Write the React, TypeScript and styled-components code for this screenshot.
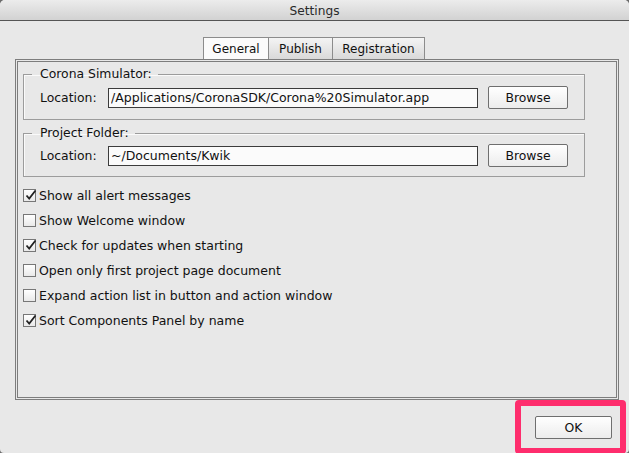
import React from "react";
import styled, { createGlobalStyle } from "styled-components";

const GlobalStyle = createGlobalStyle`
  html, body {
    margin: 0;
    padding: 0;
    background: #6b6b6b;
  }
  body {
    font-family: "Lucida Grande", "DejaVu Sans", sans-serif;
    font-size: 12.4px;
    color: #111;
  }
`;

const Window = styled.div`
  width: 629px;
  height: 453px;
  background: #e8e8e8;
  border-radius: 5px 5px 4px 4px;
  display: flex;
  flex-direction: column;
  overflow: hidden;
`;

const TitleBar = styled.div`
  flex: none;
  height: 21px;
  padding-top: 1px;
  box-sizing: border-box;
  border-bottom: 1px solid #555;
  background: linear-gradient(#ececec, #d2d2d2);
  display: flex;
  align-items: center;
  justify-content: center;
  color: #2a2a2a;
  font-size: 12.2px;
`;

const Body = styled.div`
  flex: none;
  display: flex;
  flex-direction: column;
  padding: 16px 15px 0 15px;
`;

const TabStrip = styled.div`
  display: flex;
  justify-content: center;
  height: 22px;
`;

const Tab = styled.div<{ $active?: boolean; $w: number }>`
  width: ${(p) => p.$w}px;
  height: 21px;
  box-sizing: content-box;
  border: 1px solid #8c8c8c;
  border-bottom: none;
  margin-left: -1px;
  display: flex;
  align-items: center;
  justify-content: center;
  font-size: 12px;
  background: ${(p) =>
    p.$active ? "#fbfbfb" : "linear-gradient(#f4f4f4, #d9d9d9)"};
`;

const Panel = styled.div`
  width: 593px;
  height: 330px;
  border: 3px double #7d7d7d;
  display: flex;
  flex-direction: column;
  padding: 5px 0 0 5px;
  box-sizing: content-box;
`;

const Group = styled.fieldset`
  width: 560px;
  margin: 0 0 6px 0;
  padding: 0;
  border: 1px solid #9c9c9c;
  box-shadow: inset 1px 1px 0 #fafafa;
  min-inline-size: 0;
`;

const Legend = styled.legend`
  margin-left: 8px;
  padding: 0 6px 0 8px;
  line-height: 14px;
  font-size: 12.4px;
`;

const Row = styled.div<{ $top: number; $bottom: number }>`
  display: flex;
  align-items: center;
  padding: ${(p) => p.$top}px 0 ${(p) => p.$bottom}px 16px;
`;

const FieldLabel = styled.span`
  width: 68px;
`;

const PathField = styled.input`
  width: 370px;
  height: 20px;
  box-sizing: border-box;
  border: 1px solid #3c3c3c;
  background: #fbfbfb;
  padding: 0 2px;
  margin: 0 10px 0 0;
  font-family: inherit;
  font-size: 12.5px;
  color: #111;
  outline: none;
`;

const PushButton = styled.button<{ $w: number }>`
  width: ${(p) => p.$w}px;
  height: 23px;
  box-sizing: border-box;
  border: 1px solid #6f6f6f;
  border-radius: 2px;
  background: linear-gradient(#ffffff, #ececec);
  font-family: inherit;
  font-size: 12.4px;
  color: #111;
  padding: 0;
  margin: 0;
`;

const CheckList = styled.div`
  display: flex;
  flex-direction: column;
  margin-top: 0;
`;

const CheckRow = styled.label`
  height: 25px;
  display: flex;
  align-items: center;
  gap: 3px;
  font-size: 12.5px;
`;

const Box = styled.span`
  width: 13px;
  height: 13px;
  box-sizing: border-box;
  border: 1px solid #777;
  background: linear-gradient(#ffffff, #e9e9e9);
  position: relative;
`;

const Tick = styled.svg`
  position: absolute;
  left: 0;
  top: -2px;
`;

const Footer = styled.div`
  flex: none;
  height: 54px;
  display: flex;
  justify-content: flex-end;
  padding-right: 3px;
`;

const Highlight = styled.div`
  border: 6px solid #fe2d6d;
  border-radius: 4px;
  padding: 9px 8px 9px 14px;
  display: flex;
  align-items: center;
`;

const options = [
  { text: "Show all alert messages", on: true },
  { text: "Show Welcome window", on: false },
  { text: "Check for updates when starting", on: true },
  { text: "Open only first project page document", on: false },
  { text: "Expand action list in button and action window", on: false },
  { text: "Sort Components Panel by name", on: true },
];

function Check({ on }: { on: boolean }) {
  return (
    <Box>
      {on && (
        <Tick width="14" height="14" viewBox="0 0 14 14">
          <path d="M2.5 7.5 L5.2 10.5 L11.5 2.5" fill="none" stroke="#222" strokeWidth="1.8" />
        </Tick>
      )}
    </Box>
  );
}

export default function App() {
  return (
    <>
      <GlobalStyle />
      <Window>
        <TitleBar>Settings</TitleBar>
        <Body>
          <TabStrip>
            <Tab $active $w={64}>General</Tab>
            <Tab $w={63}>Publish</Tab>
            <Tab $w={91}>Registration</Tab>
          </TabStrip>
          <Panel>
            <Group>
              <Legend>Corona Simulator:</Legend>
              <Row $top={5} $bottom={10}>
                <FieldLabel>Location:</FieldLabel>
                <PathField readOnly value="/Applications/CoronaSDK/Corona%20Simulator.app" />
                <PushButton $w={80}>Browse</PushButton>
              </Row>
            </Group>
            <Group>
              <Legend>Project Folder:</Legend>
              <Row $top={4} $bottom={9}>
                <FieldLabel>Location:</FieldLabel>
                <PathField readOnly value="~/Documents/Kwik" />
                <PushButton $w={80}>Browse</PushButton>
              </Row>
            </Group>
            <CheckList>
              {options.map((o) => (
                <CheckRow key={o.text}>
                  <Check on={o.on} />
                  {o.text}
                </CheckRow>
              ))}
            </CheckList>
          </Panel>
        </Body>
        <Footer>
          <Highlight>
            <PushButton $w={77}>OK</PushButton>
          </Highlight>
        </Footer>
      </Window>
    </>
  );
}
